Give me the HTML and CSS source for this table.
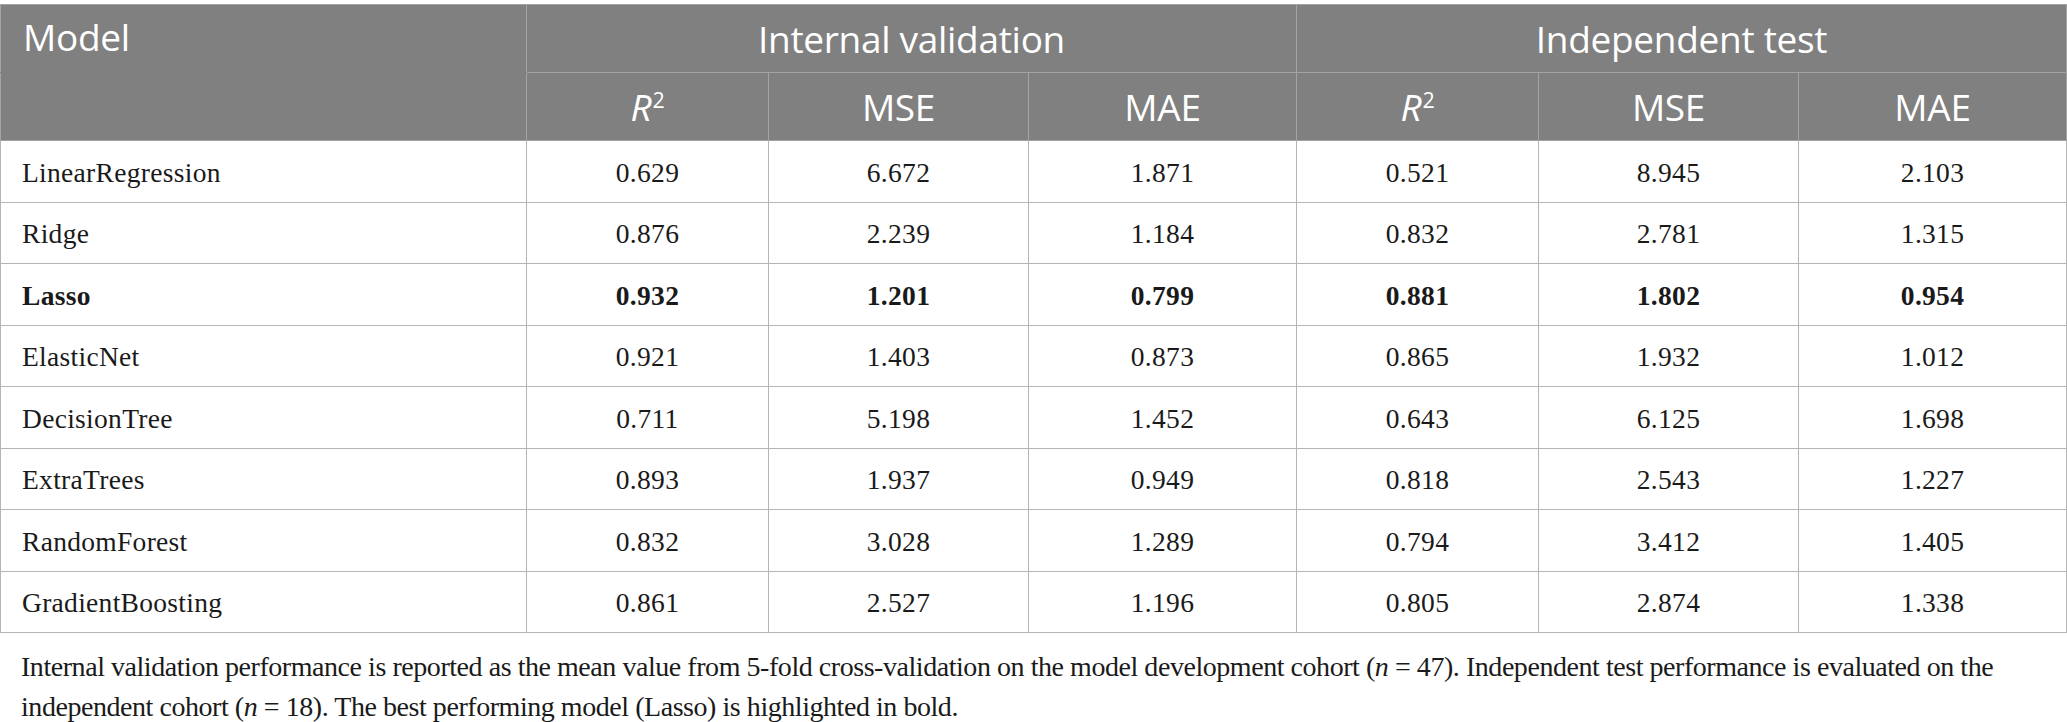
FILE: index.html
```html
<!DOCTYPE html>
<html lang="en">
<head>
<meta charset="utf-8">
<title>Model performance</title>
<link rel="stylesheet" href="styles.css">
</head>
<body>
<div class="wrap">
<table class="perf">
  <colgroup>
    <col class="c-model">
    <col class="c-r2">
    <col class="c-mse">
    <col class="c-mae">
    <col class="c-r2">
    <col class="c-mse">
    <col class="c-mae">
  </colgroup>
  <thead>
    <tr class="h1">
      <th class="left">Model</th>
      <th colspan="3">Internal validation</th>
      <th colspan="3">Independent test</th>
    </tr>
    <tr class="h2">
      <th class="blank"></th>
      <th><i>R</i><sup>2</sup></th>
      <th>MSE</th>
      <th>MAE</th>
      <th><i>R</i><sup>2</sup></th>
      <th>MSE</th>
      <th>MAE</th>
    </tr>
  </thead>
  <tbody>
    <tr><td class="left">LinearRegression</td><td>0.629</td><td>6.672</td><td>1.871</td><td>0.521</td><td>8.945</td><td>2.103</td></tr>
    <tr><td class="left">Ridge</td><td>0.876</td><td>2.239</td><td>1.184</td><td>0.832</td><td>2.781</td><td>1.315</td></tr>
    <tr class="best"><td class="left">Lasso</td><td>0.932</td><td>1.201</td><td>0.799</td><td>0.881</td><td>1.802</td><td>0.954</td></tr>
    <tr><td class="left">ElasticNet</td><td>0.921</td><td>1.403</td><td>0.873</td><td>0.865</td><td>1.932</td><td>1.012</td></tr>
    <tr><td class="left">DecisionTree</td><td>0.711</td><td>5.198</td><td>1.452</td><td>0.643</td><td>6.125</td><td>1.698</td></tr>
    <tr><td class="left">ExtraTrees</td><td>0.893</td><td>1.937</td><td>0.949</td><td>0.818</td><td>2.543</td><td>1.227</td></tr>
    <tr><td class="left">RandomForest</td><td>0.832</td><td>3.028</td><td>1.289</td><td>0.794</td><td>3.412</td><td>1.405</td></tr>
    <tr><td class="left">GradientBoosting</td><td>0.861</td><td>2.527</td><td>1.196</td><td>0.805</td><td>2.874</td><td>1.338</td></tr>
  </tbody>
</table>
<p class="caption">Internal validation performance is reported as the mean value from 5-fold cross-validation on the model development cohort (<i>n</i> = 47). Independent test performance is evaluated on the<br>independent cohort (<i>n</i> = 18). The best performing model (Lasso) is highlighted in bold.</p>
</div>
</body>
</html>
```

FILE: styles.css
```css
html, body {
  margin: 0;
  padding: 0;
  background: #ffffff;
}

.wrap {
  padding-top: 4px;
  width: 2067px;
}

.perf {
  border-collapse: collapse;
  table-layout: fixed;
  width: 2067px;
  color: #1a1a1a;
  font-family: "Liberation Serif", "Times New Roman", serif;
  font-size: 27.5px;
  letter-spacing: 0.3px;
}

.c-model { width: 526px; }
.c-r2 { width: 242px; }
.c-mse { width: 260px; }
.c-mae { width: 268px; }

.perf thead tr {
  height: 68px;
}

.perf tbody tr {
  height: 61.5px;
}

.perf th {
  background: #808080;
  color: #ffffff;
  font-family: "Open Sans", "Noto Sans", sans-serif;
  font-weight: 400;
  font-size: 37px;
  letter-spacing: -0.3px;
  text-align: center;
  padding: 0;
  border: 1px solid #a3a3a3;
  line-height: 1;
}

.perf th.left {
  text-align: left;
  padding-left: 22px;
  vertical-align: top;
  padding-top: 13px;
}

.perf thead tr.h1 th.left {
  border-bottom-color: #808080;
}

.perf th.blank {
  border-top-color: #808080;
}

.perf th sup {
  font-size: 0.58em;
  font-style: normal;
  vertical-align: 0.6em;
  line-height: 0;
  margin-left: 1px;
}

.perf td {
  border: 1px solid #b5b5b5;
  padding: 2px 0 0 0;
  text-align: center;
  vertical-align: middle;
  line-height: 1;
}

.perf td.left {
  text-align: left;
  padding-left: 21px;
}

.perf tr.best td {
  font-weight: bold;
}

.caption {
  margin: 14px 0 0 0;
  padding-left: 21px;
  color: #1a1a1a;
  font-family: "Liberation Serif", "Times New Roman", serif;
  font-size: 28px;
  line-height: 40px;
  letter-spacing: -0.45px;
  white-space: nowrap;
}
```
